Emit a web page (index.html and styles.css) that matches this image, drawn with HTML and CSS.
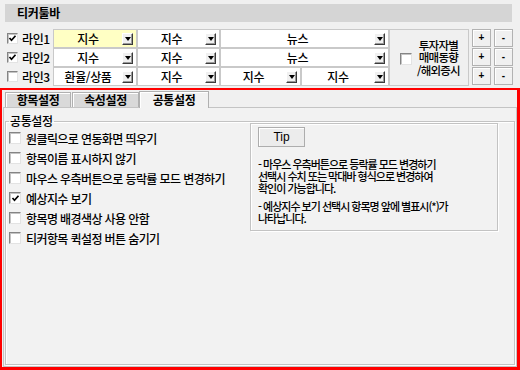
FILE: index.html
```html
<!DOCTYPE html>
<html lang="ko">
<head>
<meta charset="utf-8">
<link rel="stylesheet" href="styles.css">
</head>
<body>
<div class="app">
  <div class="title">티커툴바</div>
  <div class="toolbar">
    <div class="lines">
      <div class="row">
        <label class="rl"><span class="cb on"><svg viewBox="0 0 9 9"><path d="M1.5 4 L3.5 6.2 L7.5 1.8" /></svg></span>라인1</label>
        <div class="combo c1 hl"><span>지수</span><i class="dd"></i></div>
        <div class="combo c2"><span>지수</span><i class="dd"></i></div>
        <div class="combo c3"><span>뉴스</span><i class="dd"></i></div>
      </div>
      <div class="row">
        <label class="rl"><span class="cb on"><svg viewBox="0 0 9 9"><path d="M1.5 4 L3.5 6.2 L7.5 1.8" /></svg></span>라인2</label>
        <div class="combo c1"><span>지수</span><i class="dd"></i></div>
        <div class="combo c2"><span>지수</span><i class="dd"></i></div>
        <div class="combo c3"><span>뉴스</span><i class="dd"></i></div>
      </div>
      <div class="row">
        <label class="rl"><span class="cb"></span>라인3</label>
        <div class="combo c1"><span>환율/상품</span><i class="dd"></i></div>
        <div class="combo c2"><span>지수</span><i class="dd"></i></div>
        <div class="combo c3a"><span>지수</span><i class="dd"></i></div>
        <div class="combo c3b"><span>지수</span><i class="dd"></i></div>
      </div>
    </div>
    <div class="invest">
      <span class="cb"></span>
      <div class="invest-text">투자자별<br>매매동향<br>/해외증시</div>
    </div>
    <div class="pm">
      <button class="pmb">+</button><button class="pmb">-</button>
      <button class="pmb">+</button><button class="pmb">-</button>
      <button class="pmb">+</button><button class="pmb">-</button>
    </div>
  </div>
  <div class="frame">
    <div class="tabs">
      <div class="tab">항목설정</div>
      <div class="tab">속성설정</div>
      <div class="tab active">공통설정</div>
    </div>
    <div class="panel">
      <fieldset class="group">
        <legend>공통설정</legend>
        <div class="gbody">
          <div class="opts">
            <label class="opt"><span class="cb big"></span>원클릭으로 연동화면 띄우기</label>
            <label class="opt"><span class="cb big"></span>항목이름 표시하지 않기</label>
            <label class="opt"><span class="cb big"></span>마우스 우측버튼으로 등락률 모드 변경하기</label>
            <label class="opt"><span class="cb big on"><svg viewBox="0 0 9 9"><path d="M1.5 4 L3.5 6.2 L7.5 1.8" /></svg></span>예상지수 보기</label>
            <label class="opt"><span class="cb big"></span>항목명 배경색상 사용 안함</label>
            <label class="opt"><span class="cb big"></span>티커항목 퀵설정 버튼 숨기기</label>
          </div>
          <div class="tipbox">
            <button class="tipbtn">Tip</button>
            <p class="tiptext">- 마우스 우측버튼으로 등락률 모드 변경하기<br>선택시 수치 또는 막대바 형식으로 변경하여<br>확인이 가능합니다.</p>
            <p class="tiptext">- 예상지수 보기 선택시 항목명 앞에 별표시(*)가<br>나타납니다.</p>
          </div>
        </div>
      </fieldset>
    </div>
  </div>
</div>
</body>
</html>
```
FILE: styles.css
```css
html, body {
  margin: 0;
  padding: 0;
}
body {
  background: #f0f0f0;
  font-family: "Noto Sans CJK KR", "Noto Sans", sans-serif;
  font-size: 12px;
  font-weight: 500;
  color: #000;
}
.app {
  width: 520px;
  height: 370px;
  display: flex;
  flex-direction: column;
}
.title {
  margin: 4px 8px 0 5px;
  height: 18px;
  line-height: 18px;
  background: #d5d5d5;
  padding-left: 12px;
  font-weight: bold;
  letter-spacing: -0.3px;
}
.toolbar {
  display: flex;
  margin-top: 7px;
  height: 57px;
  padding-left: 5px;
}
.lines {
  display: flex;
  flex-direction: column;
}
.row {
  display: flex;
  height: 19px;
}
.rl {
  width: 48px;
  box-sizing: border-box;
  padding-left: 2px;
  display: flex;
  align-items: center;
  gap: 4px;
  letter-spacing: -0.4px;
}
.cb {
  width: 11px;
  height: 11px;
  box-sizing: border-box;
  background: #fff;
  border: 1px solid;
  border-color: #848484 #e3e3e3 #e3e3e3 #848484;
  box-shadow: inset 1px 1px 0 #c4c4c4;
  display: inline-flex;
  align-items: center;
  justify-content: center;
  flex: none;
}
.cb.big {
  width: 12px;
  height: 12px;
}
.cb svg {
  width: 9px;
  height: 9px;
}
.cb svg path {
  fill: none;
  stroke: #000;
  stroke-width: 1.7;
}
.combo {
  box-sizing: border-box;
  height: 19px;
  border: 1px solid #c9c9c9;
  background: #fff;
  display: flex;
  align-items: center;
  padding-right: 3px;
  letter-spacing: -0.4px;
}
.combo span {
  flex: 1;
  text-align: center;
}
.hl {
  background: #ffffc4;
}
.c1 { width: 84px; }
.c2 { width: 83px; }
.c3 { width: 169px; }
.c3a { width: 81px; }
.c3b { width: 88px; }
.dd {
  width: 11px;
  height: 12px;
  box-sizing: border-box;
  background: #f0f0f0;
  border: 1px solid;
  border-color: #fff #3a3a3a #3a3a3a #fff;
  box-shadow: inset -1px -1px 0 #9a9a9a;
  display: flex;
  align-items: center;
  justify-content: center;
  flex: none;
}
.dd::after {
  content: "";
  border-left: 3px solid transparent;
  border-right: 3px solid transparent;
  border-top: 4px solid #000;
  margin-top: 1px;
}
.invest {
  width: 80px;
  height: 57px;
  box-sizing: border-box;
  border: 1px solid #c9c9c9;
  display: flex;
  align-items: center;
  padding-left: 10px;
  gap: 5px;
}
.invest .cb {
  width: 12px;
  height: 12px;
  margin-top: 2px;
}
.invest-text {
  text-align: center;
  line-height: 12.5px;
  letter-spacing: -0.8px;
  font-size: 11.5px;
}
.pm {
  display: grid;
  grid-template-columns: 19px 19px;
  grid-auto-rows: 18px;
  column-gap: 3px;
  row-gap: 1px;
  margin-left: 3px;
}
.pmb {
  margin: 0;
  padding: 0;
  background: #f0f0f0;
  border: 1px solid #b2b2b2;
  box-shadow: inset 1px 1px 0 #fff;
  font-family: "Liberation Sans", sans-serif;
  font-size: 10px;
  font-weight: bold;
  color: #000;
  line-height: 14px;
}
.frame {
  margin-top: 2px;
  flex: 1;
  box-sizing: border-box;
  border: 2px solid #ff0000;
  border-right-width: 3px;
  border-bottom-width: 3px;
  padding: 1px 0 0 1px;
  display: flex;
  flex-direction: column;
}
.tabs {
  display: flex;
  align-items: flex-end;
  height: 16px;
  padding-left: 2px;
}
.tab {
  box-sizing: border-box;
  height: 15px;
  border: 1px solid #b0b0b0;
  border-bottom: none;
  box-shadow: inset 1px 1px 0 #fff;
  background: #d9d9d9;
  text-align: center;
  font-weight: bold;
  line-height: 14px;
  letter-spacing: -0.4px;
}
.tab:nth-child(1) { width: 66px; }
.tab:nth-child(2) { width: 67px; margin-left: 1px; }
.tab.active {
  width: 70px;
  height: 17px;
  margin-bottom: -1px;
  background: #f2f2f2;
  position: relative;
  z-index: 1;
  line-height: 16px;
}
.panel {
  flex: 1;
  box-sizing: border-box;
  border: 1px solid #c4c4c4;
  background: #f2f2f2;
  padding: 0 1px 1px 1px;
  display: flex;
  flex-direction: column;
}
.group {
  flex: 1;
  margin: 6px 0 0 0;
  padding: 0 0 0 3px;
  min-width: 0;
  border: 1px solid #c3c3c3;
  box-shadow: inset 1px 1px 0 #fff, 1px 1px 0 #fff;
}
.group legend {
  padding: 0 1px;
  line-height: 14px;
  margin-top: 1px;
  letter-spacing: -0.4px;
}
.gbody {
  display: flex;
  align-items: flex-start;
}
.opts {
  width: 241px;
  padding-top: 0;
  display: flex;
  flex-direction: column;
}
.opt {
  height: 20px;
  display: flex;
  align-items: center;
  gap: 5px;
  font-size: 12px;
  letter-spacing: -0.6px;
  white-space: nowrap;
}
.tipbox {
  width: 248px;
  height: 108px;
  margin-top: -5px;
  box-sizing: border-box;
  border: 1px solid #c3c3c3;
  box-shadow: inset 1px 1px 0 #fff, 1px 1px 0 #fff;
  padding: 3px 7px 0 7px;
}
.tipbtn {
  display: block;
  margin: 0;
  width: 47px;
  height: 20px;
  padding: 0;
  background: #ececec;
  border: 1px solid #adadad;
  box-shadow: inset 1px 1px 0 #fff;
  font-family: "Liberation Sans", sans-serif;
  font-size: 12px;
  color: #000;
}
.tiptext {
  margin: 11px 0 0 0;
  font-size: 11px;
  line-height: 12px;
  letter-spacing: -1px;
  white-space: nowrap;
}
.tiptext + .tiptext {
  margin-top: 6px;
}
```
